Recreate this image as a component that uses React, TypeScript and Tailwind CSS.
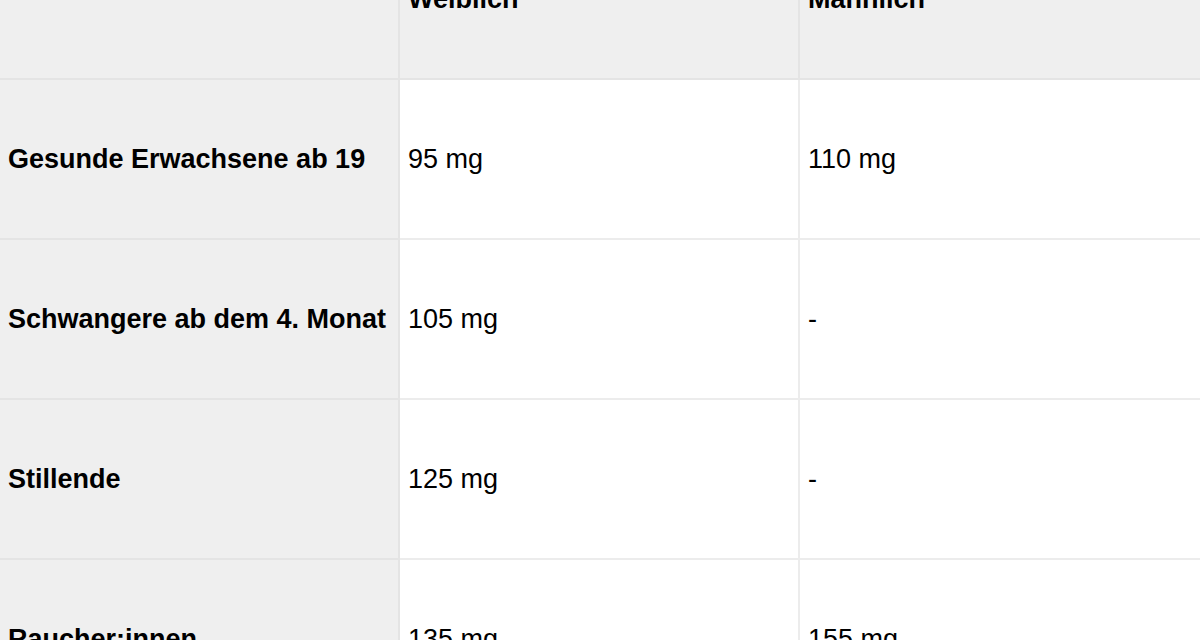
const rows = [
  { label: "Gesunde Erwachsene ab 19", female: "95 mg", male: "110 mg" },
  { label: "Schwangere ab dem 4. Monat", female: "105 mg", male: "-" },
  { label: "Stillende", female: "125 mg", male: "-" },
  { label: "Raucher:innen", female: "135 mg", male: "155 mg" },
];

export default function App() {
  return (
    <div
      className="h-[640px] w-[1200px] overflow-hidden bg-white text-black"
      style={{ fontFamily: '"Liberation Sans", Arial, sans-serif' }}
    >
      <div className="-mt-[80px] grid grid-cols-[400px_400px_400px]">
        <div className="h-[160px] border-b-2 border-r-2 border-[#e4e4e4] bg-[#efefef]" />
        <div className="flex h-[160px] items-center border-b-2 border-r-2 border-[#e4e4e4] bg-[#efefef] pl-[8px] text-[27px] font-bold">
          Weiblich
        </div>
        <div className="flex h-[160px] items-center border-b-2 border-[#e4e4e4] bg-[#efefef] pl-[8px] text-[27px] font-bold">
          Männlich
        </div>
        {rows.map((r) => (
          <div key={r.label} className="contents">
            <div className="flex h-[160px] items-center border-b-2 border-r-2 border-[#e4e4e4] bg-[#efefef] pl-[8px] text-[27px] font-bold">
              {r.label}
            </div>
            <div className="flex h-[160px] items-center border-b-2 border-r-2 border-[#ececec] bg-white pl-[8px] text-[27px]">
              {r.female}
            </div>
            <div className="flex h-[160px] items-center border-b-2 border-[#ececec] bg-white pl-[8px] text-[27px]">
              {r.male}
            </div>
          </div>
        ))}
      </div>
    </div>
  );
}
